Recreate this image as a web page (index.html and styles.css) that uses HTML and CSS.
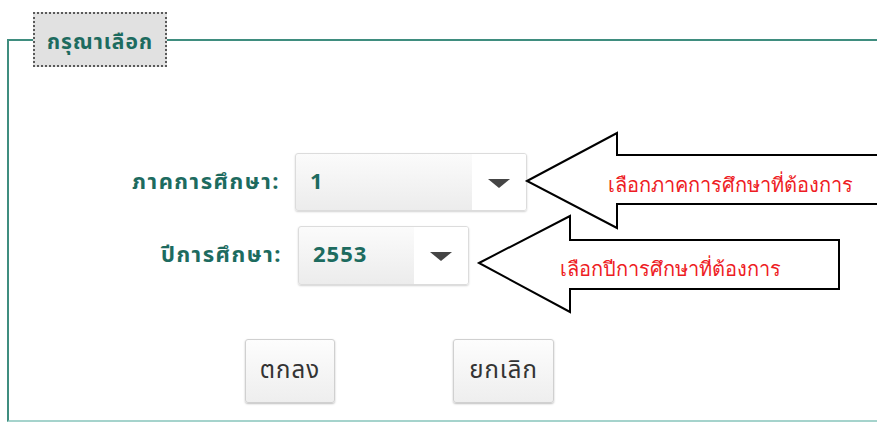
FILE: index.html
```html
<!DOCTYPE html>
<html lang="th">
<head>
<meta charset="utf-8">
<title>เลือกภาคการศึกษา</title>
<link rel="stylesheet" href="styles.css">
</head>
<body>
<fieldset class="panel">
  <legend class="panel-title">กรุณาเลือก</legend>
  <div class="form">
    <div class="row row-term">
      <label class="row-label">ภาคการศึกษา:</label>
      <div class="select select-term">
        <span class="select-value">1</span>
        <span class="select-btn"><span class="caret"></span></span>
      </div>
    </div>
    <div class="row row-year">
      <label class="row-label">ปีการศึกษา:</label>
      <div class="select select-year">
        <span class="select-value">2553</span>
        <span class="select-btn"><span class="caret"></span></span>
      </div>
    </div>
    <div class="actions">
      <button class="btn btn-ok" type="button">ตกลง</button>
      <button class="btn btn-cancel" type="button">ยกเลิก</button>
    </div>
  </div>
</fieldset>

<svg class="callouts" width="877" height="425" viewBox="0 0 877 425">
  <polygon class="callout" points="527,181 617,133 617,155 880,155 880,204 617,204 617,228"/>
  <text class="callout-text" x="608" y="192">เลือกภาคการศึกษาที่ต้องการ</text>
  <polygon class="callout" points="479,263 570,216 570,240 839,240 839,289 570,289 570,312"/>
  <text class="callout-text" x="560" y="276">เลือกปีการศึกษาที่ต้องการ</text>
</svg>
</body>
</html>
```
FILE: styles.css
```css
html, body {
  margin: 0;
  background: #ffffff;
}

body {
  position: relative;
  width: 877px;
  height: 425px;
  overflow: hidden;
  padding-top: 12px;
  box-sizing: border-box;
  font-family: "Noto Sans Thai", "Liberation Sans", "DejaVu Sans", sans-serif;
}

.panel {
  margin: 0 0 0 7px;
  width: 872px;
  box-sizing: border-box;
  border: 2px solid #3f8d7f;
  border-bottom-color: #a5d3cc;
  padding: 0 0 17px 19px;
}

.panel-title {
  margin: 0 5px;
  padding: 5px 0 0 0;
  width: 134px;
  height: 55px;
  box-sizing: border-box;
  display: flex;
  align-items: center;
  justify-content: center;
  background: #e1e1e1;
  border: 2px dotted #5a5a5a;
  color: #1d6b5f;
  font-weight: bold;
  font-size: 21px;
  letter-spacing: 1px;
}

.form {
  padding-top: 86px;
}

.row {
  display: flex;
  align-items: center;
}

.row-label {
  text-align: right;
  color: #1d6b5f;
  font-weight: bold;
  font-size: 22px;
  letter-spacing: 1.5px;
}

.row-term .row-label { width: 252px; margin-right: 15px; }
.row-year { margin-top: 15px; }
.row-year .row-label { width: 254px; margin-right: 16px; }

.select {
  display: flex;
  box-sizing: border-box;
  border: 1px solid #dcdcdc;
  border-radius: 3px;
  box-shadow: 0 1px 2px rgba(0, 0, 0, 0.18);
  background: linear-gradient(#fbfbfb, #ececec);
  overflow: hidden;
}

.select-term { width: 232px; height: 58px; }
.select-year { width: 171px; height: 59px; }

.select-value {
  flex: 1;
  display: flex;
  align-items: center;
  padding-left: 14px;
  color: #1d6b5f;
  font-weight: bold;
  font-size: 22px;
  letter-spacing: 1px;
}

.select-btn {
  width: 54px;
  display: flex;
  align-items: center;
  justify-content: center;
  background: #ffffff;
}

.caret {
  width: 0;
  height: 0;
  border-left: 11px solid transparent;
  border-right: 11px solid transparent;
  border-top: 9px solid #454545;
  margin-top: 2px;
}

.actions {
  display: flex;
  gap: 118px;
  margin-top: 54px;
  padding-left: 217px;
}

.btn {
  height: 64px;
  box-sizing: border-box;
  border: 1px solid #d0d0d0;
  border-radius: 3px;
  background: linear-gradient(#fdfdfd, #eeeeee);
  box-shadow: 0 1px 2px rgba(0, 0, 0, 0.25);
  color: #333333;
  font-family: inherit;
  font-size: 24px;
  letter-spacing: 1px;
  padding: 0;
}

.btn-ok { width: 90px; }
.btn-cancel { width: 101px; }

.callouts {
  position: absolute;
  top: 0;
  left: 0;
  pointer-events: none;
}

.callout {
  fill: #ffffff;
  stroke: #000000;
  stroke-width: 2;
  stroke-linejoin: miter;
}

.callout-text {
  fill: #ee1c24;
  font-family: "Liberation Serif", "DejaVu Serif", serif;
  font-size: 20px;
}
```
